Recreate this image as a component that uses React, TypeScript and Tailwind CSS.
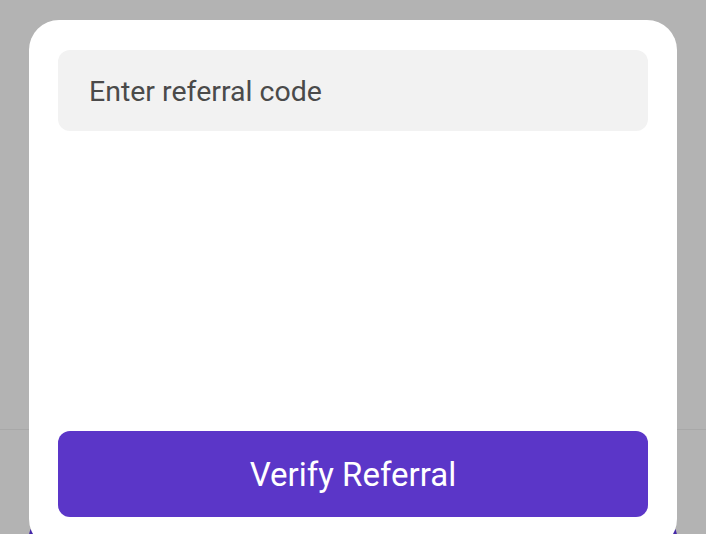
import React from "react";

export default function App() {
  return (
    <div
      className="relative h-[534px] w-[706px] overflow-hidden bg-[#b3b3b3]"
      style={{ fontFamily: "Roboto, 'Noto Sans', sans-serif" }}
    >
      {/* underlying dimmed page */}
      <div className="flex h-full flex-col">
        <div className="h-[429px] shrink-0" />
        <div className="flex shrink-0 flex-col border-t border-[#a8a8a8]">
          <div className="h-[92px] shrink-0" />
          <div className="mx-[29px] h-[60px] shrink-0 rounded-[14px] bg-[#4528a8]" />
        </div>
      </div>

      {/* bottom sheet */}
      <div className="absolute left-[29px] top-[20px] flex h-[529px] w-[648px] flex-col justify-between rounded-[30px] bg-white px-[29px] pb-[32px] pt-[30px]">
        <div className="flex h-[81px] items-center rounded-[12px] bg-[#f2f2f2] pl-[31px] pt-[3px]">
          <span className="text-[28.5px] leading-none text-[#4a4a4a]">Enter referral code</span>
        </div>
        <button className="flex h-[86px] w-full items-center justify-center rounded-[12px] bg-[#5b36c8] text-[33px] leading-none text-white">
          Verify Referral
        </button>
      </div>
    </div>
  );
}
